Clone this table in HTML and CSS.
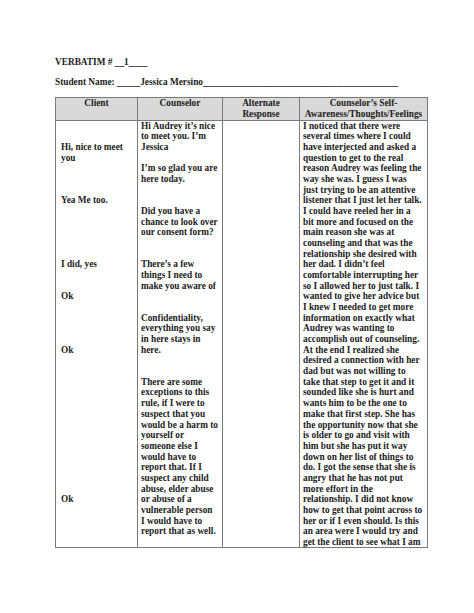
FILE: index.html
```html
<!DOCTYPE html>
<html>
<head>
<meta charset="utf-8">
<link rel="stylesheet" href="styles.css">
</head>
<body>
<div class="page">
  <p class="title">VERBATIM # __1____</p>
  <p class="name">Student Name: _____Jessica Mersino__________________________________________</p>
  <table class="verbatim">
    <colgroup>
      <col class="w-client">
      <col class="w-couns">
      <col class="w-alt">
      <col class="w-self">
    </colgroup>
    <thead>
      <tr>
        <th>Client</th>
        <th>Counselor</th>
        <th>Alternate<br>Response</th>
        <th>Counselor’s Self-<br>Awareness/Thoughts/Feelings</th>
      </tr>
    </thead>
    <tbody>
      <tr>
        <td class="c-client"><div class="clip"><br><br>Hi, nice to meet<br>you<br><br><br><br>Yea Me too.<br><br><br><br><br><br>I did, yes<br><br><br>Ok<br><br><br><br><br>Ok<br><br><br><br><br><br><br><br><br><br><br><br><br><br>Ok</div></td>
        <td><div class="clip">Hi Audrey it’s nice<br>to meet you. I’m<br>Jessica<br><br>I’m so glad you are<br>here today.<br><br><br>Did you have a<br>chance to look over<br>our consent form?<br><br><br>There’s a few<br>things I need to<br>make you aware of<br><br><br>Confidentiality,<br>everything you say<br>in here stays in<br>here.<br><br><br>There are some<br>exceptions to this<br>rule, if I were to<br>suspect that you<br>would be a harm to<br>yourself or<br>someone else I<br>would have to<br>report that. If I<br>suspect any child<br>abuse, elder abuse<br>or abuse of a<br>vulnerable person<br>I would have to<br>report that as well.</div></td>
        <td><div class="clip"></div></td>
        <td><div class="clip">I noticed that there were<br>several times where I could<br>have interjected and asked a<br>question to get to the real<br>reason Audrey was feeling the<br>way she was. I guess I was<br>just trying to be an attentive<br>listener that I just let her talk.<br>I could have reeled her in a<br>bit more and focused on the<br>main reason she was at<br>counseling and that was the<br>relationship she desired with<br>her dad. I didn’t feel<br>comfortable interrupting her<br>so I allowed her to just talk. I<br>wanted to give her advice but<br>I knew I needed to get more<br>information on exactly what<br>Audrey was wanting to<br>accomplish out of counseling.<br>At the end I realized she<br>desired a connection with her<br>dad but was not willing to<br>take that step to get it and it<br>sounded like she is hurt and<br>wants him to be the one to<br>make that first step. She has<br>the opportunity now that she<br>is older to go and visit with<br>him but she has put it way<br>down on her list of things to<br>do. I got the sense that she is<br>angry that he has not put<br>more effort in the<br>relationship. I did not know<br>how to get that point across to<br>her or if I even should. Is this<br>an area were I would try and<br>get the client to see what I am</div></td>
      </tr>
    </tbody>
  </table>
</div>
</body>
</html>
```
FILE: styles.css
```css
html, body {
  margin: 0;
  padding: 0;
  background: #ffffff;
}
.page {
  padding: 57px 0 0 55px;
  font-family: "Liberation Serif", "Times New Roman", serif;
  font-weight: bold;
  font-size: 9.3px;
  line-height: 10.67px;
  color: #1c1c1c;
}
.title {
  margin: 0;
}
.name {
  margin: 9.5px 0 0 0;
  white-space: nowrap;
}
.verbatim {
  margin-top: 9.5px;
  border-collapse: collapse;
  table-layout: fixed;
  width: 372px;
}
.w-client { width: 82px; }
.w-couns { width: 85px; }
.w-alt { width: 77px; }
.w-self { width: 128px; }
.verbatim th,
.verbatim td {
  border: 1px solid #7a7a7a;
  vertical-align: top;
  padding: 0 3px;
  overflow: hidden;
}
.verbatim th {
  background: #d9d9d9;
  font-weight: bold;
  text-align: center;
  padding: 0 1px;
  height: 21.3px;
}
.verbatim td.c-client { padding-left: 5px; }
.clip {
  height: 426.7px;
  overflow: hidden;
  white-space: nowrap;
}
```
